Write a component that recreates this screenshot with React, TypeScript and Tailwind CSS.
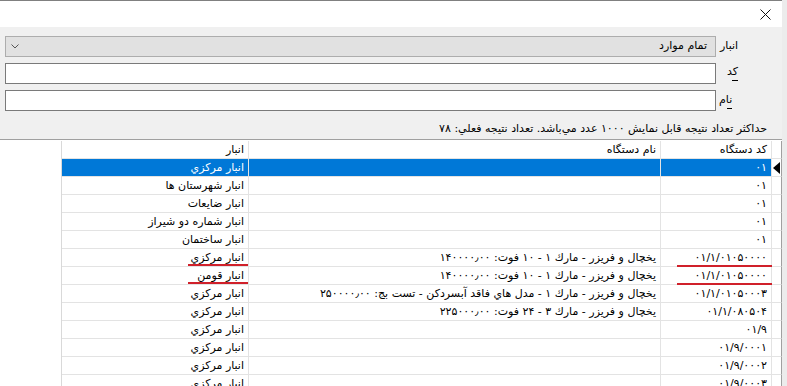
import React from "react";

type Row = { code: string; name: string; store: string; mark?: boolean };

const rows: Row[] = [
  { code: "۰۱", name: "", store: "انبار مرکزي" },
  { code: "۰۱", name: "", store: "انبار شهرستان ها" },
  { code: "۰۱", name: "", store: "انبار ضايعات" },
  { code: "۰۱", name: "", store: "انبار شماره دو شيراز" },
  { code: "۰۱", name: "", store: "انبار ساختمان" },
  { code: "۰۱/۱/۰۱۰۵۰۰۰۰", name: "يخچال و فريزر - مارك ۱ - ۱۰ فوت: ۱۴۰۰۰۰٫۰۰", store: "انبار مرکزي", mark: true },
  { code: "۰۱/۱/۰۱۰۵۰۰۰۰", name: "يخچال و فريزر - مارك ۱ - ۱۰ فوت: ۱۴۰۰۰۰٫۰۰", store: "انبار قومن", mark: true },
  { code: "۰۱/۱/۰۱۰۵۰۰۰۳", name: "يخچال و فريزر - مارك ۱ - مدل هاي فاقد آبسردكن - تست بج: ۲۵۰۰۰۰٫۰۰", store: "انبار مرکزي" },
  { code: "۰۱/۱/۰۸۰۵۰۴", name: "يخچال و فريزر - مارك ۳ - ۲۴ فوت: ۲۲۵۰۰۰٫۰۰", store: "انبار مرکزي" },
  { code: "۰۱/۹", name: "", store: "انبار مرکزي" },
  { code: "۰۱/۹/۰۰۰۱", name: "", store: "انبار مرکزي" },
  { code: "۰۱/۹/۰۰۰۲", name: "", store: "انبار مرکزي" },
  { code: "۰۱/۹/۰۰۰۳", name: "", store: "انبار مرکزي" },
];

function GridRow({ row, selected }: { row: Row; selected: boolean }) {
  const cell = selected ? "bg-[#0078d7] text-white" : "text-black";
  return (
    <div className="flex h-[18px]">
      <div className="w-[62px] border-r border-[#d9d9d9]" />
      <div dir="rtl" className={`relative w-[187px] border-r border-b border-[#e3e3e3] pr-[4px] leading-[17px] whitespace-nowrap ${cell}`}>
        {row.store}
        {row.mark && <div className="absolute bottom-0 left-[126px] right-0 z-10 h-[2px] bg-[#d0202a]" />}
      </div>
      <div dir="rtl" className={`w-[412px] border-r border-b border-[#e3e3e3] pr-[4px] leading-[17px] whitespace-nowrap overflow-hidden ${cell}`}>
        {row.name}
      </div>
      <div dir="rtl" className={`relative w-[111px] border-r border-b border-[#e3e3e3] pr-[4px] leading-[17px] whitespace-nowrap ${cell}`}>
        {row.code}
        {row.mark && <div className="absolute bottom-[-1px] left-[16px] right-[-1px] z-10 h-[2px] bg-[#d0202a]" />}
      </div>
      <div className="flex w-[10px] items-center border-r border-b border-[#e3e3e3] border-r-[#a0a0a0]">
        {selected && (
          <svg width="8" height="12" viewBox="0 0 8 12" className="ml-[1px]">
            <path d="M7 0 L0 6 L7 12 Z" fill="#000" />
          </svg>
        )}
      </div>
    </div>
  );
}

export default function App() {
  return (
    <div className="w-[787px] h-[386px] overflow-hidden bg-[#ececec] font-['DejaVu_Sans',sans-serif] text-[11px] text-black">
      <div className="w-[782px] h-full bg-white border-t border-[#808080]">
        {/* title bar */}
        <div className="flex h-[26px] items-center justify-end bg-white pr-[11px]">
          <svg width="11" height="11" viewBox="0 0 11 11" stroke="#111" strokeWidth="1">
            <path d="M0.5 0.5 L10.5 10.5 M10.5 0.5 L0.5 10.5" />
          </svg>
        </div>

        {/* filters */}
        <div className="flex h-[113px] flex-col gap-[6px] bg-[#f0f0f0] pt-[9px] border-b border-[#a0a0a0]">
          <div className="flex items-center">
            <div className="ml-[5px] flex h-[21px] w-[711px] items-center justify-between border border-[#adadad] bg-[#e1e1e1] px-[5px]">
              <svg width="8" height="5" viewBox="0 0 8 5" fill="none" stroke="#555" strokeWidth="1">
                <path d="M0.5 0.5 L4 4 L7.5 0.5" />
              </svg>
              <span dir="rtl" className="pr-[3px]">تمام موارد</span>
            </div>
            <span dir="rtl" className="ml-[4px]">انبار</span>
          </div>
          <div className="flex items-center">
            <div className="ml-[5px] h-[21px] w-[711px] border border-[#7a7a7a] bg-white" />
            <span dir="rtl" className="relative ml-[11px] -mt-[2px]">
              کد
              <span className="absolute bottom-[0px] right-0 h-px w-[6px] bg-black" />
            </span>
          </div>
          <div className="flex items-center">
            <div className="ml-[5px] h-[21px] w-[711px] border border-[#7a7a7a] bg-white" />
            <span dir="rtl" className="relative ml-[3px]">
              نام
              <span className="absolute bottom-[0px] right-0 h-px w-[5px] bg-black" />
            </span>
          </div>
          <div dir="rtl" className="mt-[4px] pr-[15px] whitespace-nowrap">
            حداکثر تعداد نتيجه قابل نمايش ۱۰۰۰ عدد مي‌باشد. تعداد نتيجه فعلي: ۷۸
          </div>
        </div>

        {/* grid */}
        <div className="pt-px">
          <div className="flex h-[18px]">
            <div className="w-[62px] border-r border-[#d9d9d9]" />
            <div dir="rtl" className="w-[187px] border-r border-b border-[#e3e3e3] pr-[4px] leading-[17px]">انبار</div>
            <div dir="rtl" className="w-[412px] border-r border-b border-[#e3e3e3] pr-[4px] leading-[17px]">نام دستگاه</div>
            <div dir="rtl" className="w-[111px] border-r border-b border-[#e3e3e3] pr-[4px] leading-[17px]">کد دستگاه</div>
            <div className="w-[10px] border-r border-b border-[#e3e3e3] border-r-[#a0a0a0]" />
          </div>
          {rows.map((r, i) => (
            <GridRow key={i} row={r} selected={i === 0} />
          ))}
        </div>
      </div>
    </div>
  );
}
